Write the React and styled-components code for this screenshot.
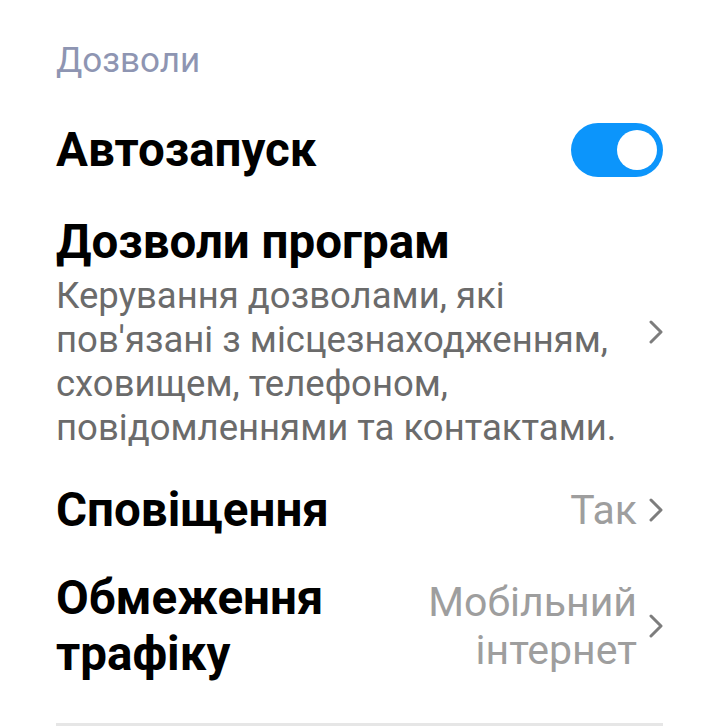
import React from 'react';
import styled, { createGlobalStyle } from 'styled-components';

const GlobalStyle = createGlobalStyle`
  html, body {
    margin: 0;
    padding: 0;
    background: #fff;
  }
  body {
    font-family: Roboto, "Noto Sans", sans-serif;
    -webkit-font-smoothing: antialiased;
  }
`;

const Screen = styled.div`
  width: 720px;
  height: 726px;
  overflow: hidden;
  box-sizing: border-box;
  padding: 0 57px 0 56px;
  background: #fff;
`;

const SectionTitle = styled.div`
  padding-top: 39px;
  font-size: 35px;
  line-height: 44px;
  color: #8e95b2;
  font-weight: 400;
`;

const Row = styled.div`
  display: flex;
  align-items: center;
  justify-content: space-between;
  gap: 16px;
  padding: ${p => p.$pad || '16px 0'};
`;

const Texts = styled.div`
  display: flex;
  flex-direction: column;
  max-width: 572px;
`;

const Title = styled.div`
  font-size: 47.5px;
  line-height: 56px;
  font-weight: 700;
  color: #000;
`;

const Description = styled.div`
  font-size: 36.5px;
  line-height: 44px;
  color: #6b6b6b;
  margin-top: 4px;
`;

const Trailing = styled.div`
  display: flex;
  align-items: center;
  gap: 12px;
  flex-shrink: 0;
`;

const Value = styled.div`
  font-size: 41px;
  line-height: 48px;
  color: #9e9e9e;
  text-align: right;
`;

const Switch = styled.div`
  width: 92px;
  height: 54px;
  border-radius: 27px;
  background: #0c95fb;
  display: flex;
  align-items: center;
  justify-content: flex-end;
  padding: 0 6px;
  box-sizing: border-box;
`;

const Knob = styled.div`
  width: 40px;
  height: 40px;
  border-radius: 50%;
  background: #fff;
`;

const Divider = styled.div`
  height: 3px;
  background: #e6e6e6;
  margin-top: 24.5px;
`;

const Chevron = () => (
  <svg width="14" height="24" viewBox="0 0 14 24">
    <path d="M2 2 L12 12 L2 22" fill="none" stroke="#7d7d7d" strokeWidth="3" strokeLinecap="round" strokeLinejoin="round" />
  </svg>
);

export default function App() {
  return (
    <Screen>
      <GlobalStyle />
      <SectionTitle>Дозволи</SectionTitle>
      <Row $pad="39px 0 18px">
        <Title>Автозапуск</Title>
        <Switch>
          <Knob />
        </Switch>
      </Row>
      <Row $pad="17.5px 0 16px">
        <Texts>
          <Title>Дозволи програм</Title>
          <Description>
            Керування дозволами, які пов'язані з місцезнаходженням, сховищем, телефоном,
            повідомленнями та контактами.
          </Description>
        </Texts>
        <Trailing>
          <Chevron />
        </Trailing>
      </Row>
      <Row $pad="16.5px 0 16px">
        <Title>Сповіщення</Title>
        <Trailing>
          <Value>Так</Value>
          <Chevron />
        </Trailing>
      </Row>
      <Row>
        <Title>
          Обмеження
          <br />
          трафіку
        </Title>
        <Trailing>
          <Value>
            Мобільний
            <br />
            інтернет
          </Value>
          <Chevron />
        </Trailing>
      </Row>
      <Divider />
    </Screen>
  );
}
